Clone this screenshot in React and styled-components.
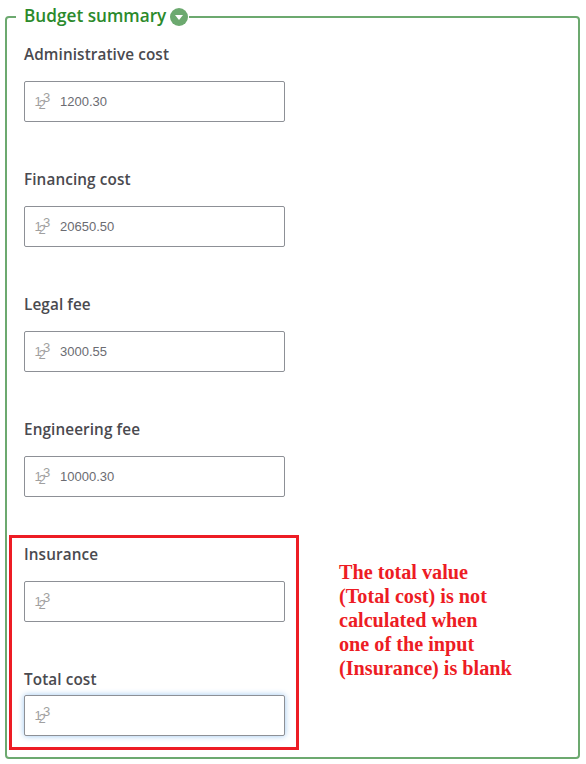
import React from "react";
import styled, { createGlobalStyle } from "styled-components";

const budgetFields = [
  { label: "Administrative cost", value: "1200.30" },
  { label: "Financing cost", value: "20650.50" },
  { label: "Legal fee", value: "3000.55" },
  { label: "Engineering fee", value: "10000.30" },
];

const NumberIcon = () => (
  <IconSvg width="18" height="26" viewBox="-1 -3 18 26">
    <text x="-0.5 3.5 8" y="14 17 10" fontSize="13">123</text>
  </IconSvg>
);

const Field = ({ label, value, focused, variant }) => (
  <FieldBox $variant={variant}>
    <FieldLabel $variant={variant}>{label}</FieldLabel>
    <InputBox $focused={focused}>
      <NumberIcon />
      <FieldValue>{value}</FieldValue>
    </InputBox>
  </FieldBox>
);

const App = () => (
  <>
    <GlobalStyle />
    <Panel>
      <Legend>
        <LegendTitle>Budget summary</LegendTitle>
        <Toggle>
          <svg width="8" height="5" viewBox="0 0 8 5">
            <path d="M0 0h8L4 5z" fill="#fff" />
          </svg>
        </Toggle>
      </Legend>
      {budgetFields.map((field) => (
        <Field key={field.label} label={field.label} value={field.value} />
      ))}
      <Bottom>
        <RedBox>
          <Field label="Insurance" variant="first" />
          <Field label="Total cost" variant="last" focused />
        </RedBox>
        <Note>
          The total value
          <br />
          (Total cost) is not
          <br />
          calculated when
          <br />
          one of the input
          <br />
          (Insurance) is blank
        </Note>
      </Bottom>
    </Panel>
  </>
);

const GlobalStyle = createGlobalStyle`
  html, body {
    margin: 0;
    background: #fff;
  }
  body {
    font-family: "Open Sans", "Liberation Sans", sans-serif;
  }
`;

const Panel = styled.fieldset`
  box-sizing: border-box;
  width: 575px;
  height: 759px;
  margin: 0 0 0 5px;
  padding: 0 0 0 17px;
  border: 2px solid #6ca96f;
  border-radius: 4px;
  min-width: 0;
`;

const Legend = styled.legend`
  display: flex;
  align-items: center;
  height: 34px;
  margin-left: -8px;
  padding: 0 1px 0 8px;
`;

const LegendTitle = styled.span`
  padding-bottom: 3px;
  font-size: 17.2px;
  font-weight: 600;
  color: #2b8a2b;
`;

const Toggle = styled.span`
  display: flex;
  align-items: center;
  justify-content: center;
  width: 18px;
  height: 18px;
  margin-left: 4px;
  border-radius: 50%;
  background: #6ca96f;
`;

const labelBoxes = {
  first: "height: 43px; padding-top: 6px;",
  last: "height: 31px; padding-top: 5px;",
};

const FieldBox = styled.div`
  margin-bottom: ${(props) => (props.$variant === "first" ? "42px" : props.$variant === "last" ? "0" : "37px")};
`;

const FieldLabel = styled.div`
  box-sizing: border-box;
  height: 47px;
  padding-top: 10px;
  font-size: 15.3px;
  letter-spacing: 0.1px;
  line-height: 20px;
  font-weight: 600;
  color: #4a4a4f;
  ${(props) => labelBoxes[props.$variant]}
`;

const InputBox = styled.div`
  box-sizing: border-box;
  display: flex;
  align-items: center;
  width: 261px;
  height: 41px;
  padding-left: 9px;
  border: 1px solid #8d9096;
  border-radius: 2px;
  background: #fff;
  box-shadow: ${(props) => (props.$focused ? "0 0 6px #9dc7f0" : "none")};
`;

const IconSvg = styled.svg`
  flex: none;
  font-family: "Liberation Sans", sans-serif;
  fill: #a0a0a0;
`;

const FieldValue = styled.span`
  margin-left: 8px;
  font-family: "Liberation Sans", sans-serif;
  font-size: 13px;
  color: #6b6c72;
`;

const Bottom = styled.div`
  display: flex;
  align-items: flex-start;
`;

const RedBox = styled.div`
  box-sizing: border-box;
  flex: none;
  width: 290px;
  height: 215px;
  margin: 1px 0 0 -15px;
  padding: 0 0 0 12px;
  border: 3px solid #ed1c24;
`;

const Note = styled.div`
  margin: 26px 0 0 40px;
  font-family: "Liberation Serif", serif;
  font-size: 20.2px;
  font-weight: 700;
  line-height: 24px;
  color: #ed1c24;
  white-space: nowrap;
`;

export default App;
